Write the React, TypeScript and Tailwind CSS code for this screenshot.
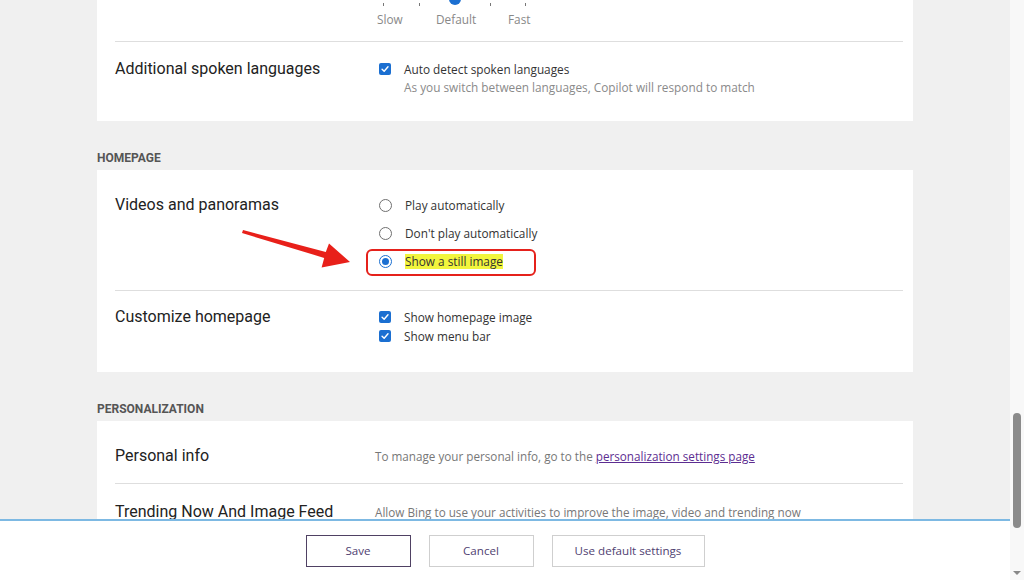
import React from 'react';

const label = "w-[260px] shrink-0 text-[16px] leading-[20px] text-[#222]";
const small = "text-[11.8px] leading-[20px] text-[#333]";

const CheckBox: React.FC = () => (
  <span className="flex h-[12px] w-[12px] items-center justify-center rounded-[2px] bg-[#1b6fd1]">
    <svg viewBox="0 0 12 12" className="h-[10px] w-[10px]">
      <path d="M2.5 6.2 L5 8.6 L9.6 3.4" fill="none" stroke="white" strokeWidth="1.7" strokeLinecap="round" strokeLinejoin="round" />
    </svg>
  </span>
);

const Radio: React.FC<{ on?: boolean }> = ({ on }) =>
  on ? (
    <span className="flex h-[13px] w-[13px] items-center justify-center rounded-full border border-[#1b6fd1] bg-white">
      <span className="h-[7px] w-[7px] rounded-full bg-[#1b6fd1]" />
    </span>
  ) : (
    <span className="h-[13px] w-[13px] rounded-full border border-[#6f6f6f] bg-white" />
  );

const Heading: React.FC<{ children: React.ReactNode }> = ({ children }) => (
  <div className="mt-[29px] mb-[4px] text-[12px] font-bold leading-[16px] text-[#555]">{children}</div>
);

export default function App() {
  return (
    <div
      className="flex h-[580px] w-[1024px] overflow-hidden bg-[#f0f0f0]"
      style={{ fontFamily: 'Roboto, "Open Sans", sans-serif' }}
    >
      <div className="flex w-[1010px] flex-col">
        <div className="relative h-[519px] overflow-hidden pl-[97px] pt-[1px]">
          {/* card 1 */}
          <div className="-mt-[1px] w-[816px] bg-white pt-[1px] pb-[10px] pl-[18px] pr-[10px]">
            <div className="flex h-[41px] border-b border-[#dedede]">
              <div className="w-[260px] shrink-0" />
              <div className="relative h-[40px] w-[170px] text-[11.8px] leading-[16px] text-[#888]" style={{ fontFamily: '"Open Sans", sans-serif' }}>
                <span className="absolute left-[8px] top-[2px] h-[3px] w-px bg-[#777]" />
                <span className="absolute left-[44px] top-[2px] h-[3px] w-px bg-[#777]" />
                <span className="absolute left-[115px] top-[2px] h-[3px] w-px bg-[#777]" />
                <span className="absolute left-[150px] top-[2px] h-[3px] w-px bg-[#777]" />
                <span className="absolute left-[74px] top-[-8px] h-[12px] w-[12px] rounded-full bg-[#1b6fd1]" />
                <span className="absolute left-[2px] top-[10px]">Slow</span>
                <span className="absolute left-[61px] top-[10px]">Default</span>
                <span className="absolute left-[133px] top-[10px]">Fast</span>
              </div>
            </div>
            <div className="flex pt-[17px] pb-[16px]">
              <div className={label}>Additional spoken languages</div>
              <div style={{ fontFamily: '"Open Sans", sans-serif' }}>
                <div className="flex items-center gap-[13px] pl-[4px]">
                  <CheckBox />
                  <span className={small}>Auto detect spoken languages</span>
                </div>
                <div className="pl-[29px] text-[11.8px] leading-[16px] text-[#8a8a8a]">
                  As you switch between languages, Copilot will respond to match
                </div>
              </div>
            </div>
          </div>

          <Heading>HOMEPAGE</Heading>
          {/* card 2 */}
          <div className="w-[816px] bg-white pt-[8px] pb-[10px] pl-[18px] pr-[10px]">
            <div className="flex border-b border-[#dedede] pt-[17px] pb-[15px]">
              <div className={label}>Videos and panoramas</div>
              <div className="-mt-[4px]" style={{ fontFamily: '"Open Sans", sans-serif' }}>
                <div className="flex h-[28px] items-center gap-[13px] pl-[4px]">
                  <Radio />
                  <span className={small}>Play automatically</span>
                </div>
                <div className="flex h-[28px] items-center gap-[13px] pl-[4px]">
                  <Radio />
                  <span className={small}>Don't play automatically</span>
                </div>
                <div className="flex h-[28px] items-center gap-[13px] pl-[4px]">
                  <Radio on />
                  <span className="bg-[#f2f53d] text-[11.8px] leading-[15px] text-[#333]">Show a still image</span>
                </div>
              </div>
            </div>
            <div className="flex pt-[16px] pb-[17px]">
              <div className={label}>Customize homepage</div>
              <div style={{ fontFamily: '"Open Sans", sans-serif' }}>
                <div className="flex h-[19px] items-center gap-[13px] pl-[4px]">
                  <CheckBox />
                  <span className={small}>Show homepage image</span>
                </div>
                <div className="flex h-[19px] items-center gap-[13px] pl-[4px]">
                  <CheckBox />
                  <span className={small}>Show menu bar</span>
                </div>
              </div>
            </div>
          </div>

          <Heading>PERSONALIZATION</Heading>
          {/* card 3 */}
          <div className="w-[816px] bg-white pt-[8px] pb-[10px] pl-[18px] pr-[10px]">
            <div className="flex items-center border-b border-[#dedede] pt-[17px] pb-[17px]">
              <div className={label}>Personal info</div>
              <div className="text-[11.7px] leading-[20px] text-[#777]" style={{ fontFamily: '"Open Sans", sans-serif' }}>
                To manage your personal info, go to the{' '}
                <a className="text-[#5c2d91] underline">personalization settings page</a>
              </div>
            </div>
            <div className="flex items-center pt-[18px] pb-[17px]">
              <div className={label}>Trending Now And Image Feed</div>
              <div className="text-[11.7px] leading-[20px] text-[#777]" style={{ fontFamily: '"Open Sans", sans-serif' }}>
                Allow Bing to use your activities to improve the image, video and trending now
              </div>
            </div>
          </div>

          {/* annotation */}
          <svg className="pointer-events-none absolute left-0 top-0" width="1010" height="519">
            <rect x="367" y="250" width="168" height="25" rx="5" fill="none" stroke="#e5211b" strokeWidth="2" />
            <polygon
              points="243,230 325.8,252.1 329,243.5 350,262 321.6,267.5 324.2,257.9 242,233"
              fill="#e8201a"
            />
          </svg>
        </div>

        <div className="flex h-[61px] justify-center gap-[18px] border-t-2 border-[#7db9e3] bg-white pt-[14px]" style={{ fontFamily: '"Open Sans", sans-serif' }}>
          <button className="h-[32px] w-[105px] border border-[#4f4163] text-[11.6px] text-[#4f4171]">Save</button>
          <button className="h-[32px] w-[105px] border border-[#cfcfcf] text-[11.6px] text-[#4f4171]">Cancel</button>
          <button className="h-[32px] w-[153px] border border-[#cfcfcf] text-[11.6px] text-[#4f4171]">Use default settings</button>
        </div>
      </div>

      <div className="flex w-[14px] flex-col items-center bg-[#f8f8f8]">
        <div className="mt-[413px] h-[115px] w-[8px] rounded-full bg-[#8b8b8b]" />
        <div className="mt-auto mb-[5px] h-0 w-0 border-x-[4px] border-t-[4px] border-x-transparent border-t-[#888]" />
      </div>
    </div>
  );
}
